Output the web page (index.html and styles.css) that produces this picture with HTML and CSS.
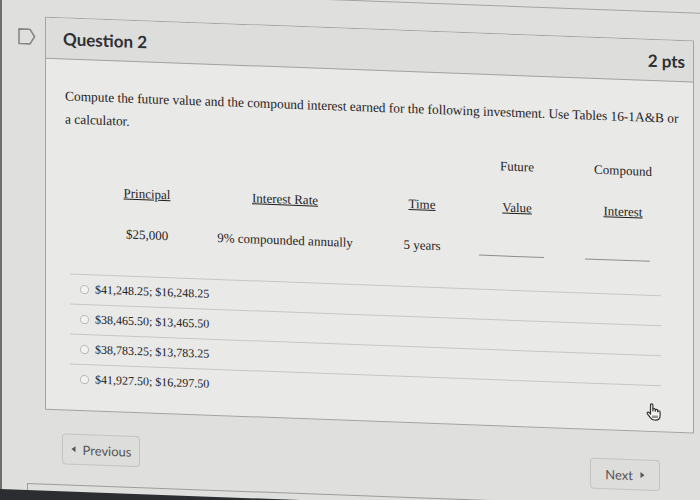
FILE: index.html
```html
<!DOCTYPE html>
<html>
<head>
<meta charset="utf-8">
<link rel="stylesheet" href="styles.css">
</head>
<body>
<div class="page">
  <div class="prev-edge"></div>
  <div class="top-row">
    <div class="flag-col">
      <svg class="flag" width="18" height="17" viewBox="0 0 18 17"><path d="M1 1.2H12L16.6 8.5L12 15.8H1Z" fill="none" stroke="#868684" stroke-width="1.6" stroke-linejoin="round"/></svg>
    </div>
    <div class="card">
      <div class="q-header">
        <h2 class="q-title">Question 2</h2>
        <span class="pts">2 pts</span>
      </div>
      <div class="q-body">
        <p class="q-text">Compute the future value and the compound interest earned for the following investment. Use Tables 16-1A&amp;B or<br>a calculator.</p>
        <div class="inv-table">
          <div class="cell"></div>
          <div class="cell"></div>
          <div class="cell"></div>
          <div class="cell">Future</div>
          <div class="cell">Compound</div>
          <div class="cell u">Principal</div>
          <div class="cell u">Interest Rate</div>
          <div class="cell u">Time</div>
          <div class="cell u">Value</div>
          <div class="cell u">Interest</div>
          <div class="cell">$25,000</div>
          <div class="cell">9% compounded annually</div>
          <div class="cell">5 years</div>
          <div class="cell blank-cell"><span class="blank"></span></div>
          <div class="cell blank-cell"><span class="blank"></span></div>
        </div>
        <div class="answers">
          <div class="answer"><span class="radio"></span><span>$41,248.25; $16,248.25</span></div>
          <div class="answer"><span class="radio"></span><span>$38,465.50; $13,465.50</span></div>
          <div class="answer"><span class="radio"></span><span>$38,783.25; $13,783.25</span></div>
          <div class="answer"><span class="radio"></span><span>$41,927.50; $16,297.50</span></div>
        </div>
        <svg class="cursor" width="16" height="18" viewBox="0 0 16 18"><path d="M5.5 10V2.2a1.2 1.2 0 0 1 2.4 0V8V6.8a1.2 1.2 0 0 1 2.4 0V8.2V7.6a1.2 1.2 0 0 1 2.4 0V8.8a1.2 1.2 0 0 1 2.4 0V12.2c0 2.9-2 4.8-4.8 4.8H9.2c-1.9 0-3-0.9-4.1-2.4L2.3 11.1a1.2 1.2 0 0 1 1.9-1.4L5.5 11.3Z" fill="#f4f4f2" stroke="#333" stroke-width="1.2" stroke-linejoin="round"/><path d="M8 12.5V15M10 12.5V15M12 12.5V15" stroke="#333" stroke-width="1"/></svg>
      </div>
    </div>
  </div>
  <div class="nav">
    <button class="btn prev"><svg width="5" height="7" viewBox="0 0 5 7"><path d="M4.5 0.5V6.5L0.5 3.5Z" fill="#555"/></svg>Previous</button>
    <button class="btn next">Next<svg width="5" height="7" viewBox="0 0 5 7"><path d="M0.5 0.5V6.5L4.5 3.5Z" fill="#555"/></svg></button>
  </div>
  <div class="next-card"></div>
  <div class="bezel"></div>
</div>
</body>
</html>
```

FILE: styles.css
```css
html {
  background: #dfdfdd;
  box-shadow: inset 2px 0 0 #6e6e6c;
}
html, body {
  margin: 0;
  width: 700px;
  height: 500px;
  overflow: hidden;
}
.page {
  transform: skewY(2.1deg);
  transform-origin: 0 0;
  display: flex;
  flex-direction: column;
}
.prev-edge {
  height: 0;
  border-top: 1px solid #a4a4a2;
  margin: -13px 0 27px 45px;
}
.top-row {
  display: flex;
  align-items: flex-start;
}
.flag-col {
  width: 45px;
  flex: none;
  box-sizing: border-box;
  padding: 12px 0 0 18px;
}
.flag { display: block; }
.card {
  width: 647px;
  flex: none;
  border: 1px solid #a3a3a1;
  background: #e9e9e7;
}
.q-header {
  height: 40px;
  display: flex;
  align-items: center;
  justify-content: space-between;
  padding: 0 8px 0 17px;
  background: #dddddb;
  border-bottom: 1px solid #a3a3a1;
}
.q-title, .pts {
  margin: 0;
  font-family: Lato, "Liberation Sans", sans-serif;
  font-weight: 700;
  font-size: 17px;
  color: #2e3033;
}
.q-body {
  position: relative;
  padding: 26px 0 16px 19px;
}
.q-text {
  margin: 0;
  font-family: "Liberation Serif", serif;
  font-size: 13.4px;
  line-height: 22.5px;
  color: #1f1f1f;
  white-space: nowrap;
}
.inv-table {
  display: grid;
  grid-template-columns: 124px 152px 122px 68px 144px;
  grid-template-rows: 40px 42px 40px;
  margin-left: 20px;
  font-family: "Liberation Serif", serif;
  font-size: 13px;
  color: #1f1f1f;
}
.cell {
  display: flex;
  align-items: center;
  justify-content: center;
}
.u { text-decoration: underline; }
.blank-cell {
  align-items: flex-start;
  padding-top: 27px;
}
.blank {
  display: block;
  flex: none;
  width: 65px;
  height: 0;
  margin-right: 12px;
  border-top: 1px solid #8e8e8c;
}
.answers {
  margin: 21px 32px 0 5px;
}
.answer {
  height: 30px;
  box-sizing: border-box;
  border-top: 1px solid #c6c6c4;
  display: flex;
  align-items: center;
  gap: 6px;
  padding-left: 10px;
  font-family: "Liberation Serif", serif;
  font-size: 12px;
  color: #222;
}
.radio {
  width: 9px;
  height: 9px;
  box-sizing: border-box;
  border-radius: 50%;
  border: 1px solid #b8b8b6;
  background: #f2f2f0;
}
.cursor {
  position: absolute;
  left: 599px;
  top: 322px;
}
.nav {
  display: flex;
  justify-content: space-between;
  align-items: flex-start;
  padding: 0 40px 0 62px;
  margin-top: 23px;
}
.btn {
  height: 31px;
  box-sizing: border-box;
  display: flex;
  align-items: center;
  justify-content: center;
  gap: 7px;
  padding: 0;
  font-family: Lato, "Liberation Sans", sans-serif;
  font-size: 13px;
  color: #555;
  background: #dddddb;
  border: 1px solid #c4c4c2;
  border-radius: 4px;
}
.prev { width: 78px; }
.next { width: 70px; margin-top: 5px; }
.next-card {
  height: 6px;
  width: 660px;
  margin: 15px 0 0 27px;
  border-top: 1px solid #9c9c9a;
  border-left: 1px solid #9c9c9a;
}
.bezel {
  height: 20px;
  background: #2b2d31;
}
```
